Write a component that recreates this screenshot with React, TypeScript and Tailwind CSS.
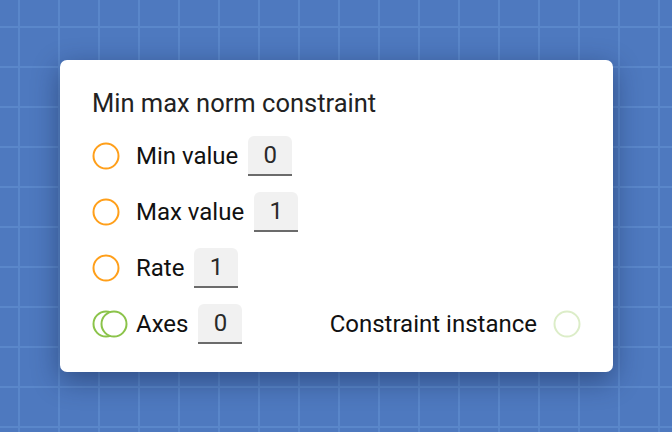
import React from "react";

const Ring = ({ color }: { color: string }) => (
  <svg width="28" height="28" viewBox="0 0 28 28" className="shrink-0">
    <circle cx="14" cy="14" r="12.5" fill="none" stroke={color} strokeWidth="2" />
  </svg>
);

const DoubleRing = () => (
  <svg width="36" height="28" viewBox="0 0 36 28" className="shrink-0">
    <circle cx="14" cy="14" r="12.5" fill="none" stroke="#8bc34a" strokeWidth="2" />
    <circle cx="22" cy="14" r="12.5" fill="white" stroke="#8bc34a" strokeWidth="2" />
  </svg>
);

const Field = ({ value }: { value: string }) => (
  <div className="ml-[10px] flex h-[40px] w-[44px] items-center justify-center rounded-t-[6px] border-b-2 border-[#6b6b6b] bg-[#f1f1f1] text-[24px] text-[#2a2a2a]">
    {value}
  </div>
);

const Row = ({ label, value }: { label: string; value: string }) => (
  <div className="flex h-[40px] items-center">
    <Ring color="#ff9f1a" />
    <span className="ml-4 text-[24px] leading-[40px] text-[#111]">{label}</span>
    <Field value={value} />
  </div>
);

export default function App() {
  return (
    <div
      className="h-[432px] w-[672px] overflow-hidden bg-[#4e79bf] pl-[60px] pt-[60px] [background-image:linear-gradient(to_right,#5a87ca_2px,transparent_2px),linear-gradient(to_bottom,#5a87ca_2px,transparent_2px)] [background-position:18px_26px] [background-size:40px_40px]"
      style={{ fontFamily: "Roboto, 'Liberation Sans', sans-serif" }}
    >
      <div className="flex h-[312px] w-[553px] flex-col rounded-[7px] bg-white px-8 pt-[27px] shadow-[0_8px_28px_rgba(10,25,60,0.45)]">
        <div className="text-[25.5px] leading-[32px] text-[#222]">Min max norm constraint</div>
        <div className="mt-[17px] flex flex-col gap-4">
          <Row label="Min value" value="0" />
          <Row label="Max value" value="1" />
          <Row label="Rate" value="1" />
          <div className="flex h-[40px] items-center justify-between">
            <div className="flex items-center">
              <DoubleRing />
              <span className="ml-[8px] text-[24px] leading-[40px] text-[#111]">Axes</span>
              <Field value="0" />
            </div>
            <div className="flex items-center gap-4">
              <span className="text-[24px] leading-[40px] text-[#111]">Constraint instance</span>
              <Ring color="#dcedc8" />
            </div>
          </div>
        </div>
      </div>
    </div>
  );
}
